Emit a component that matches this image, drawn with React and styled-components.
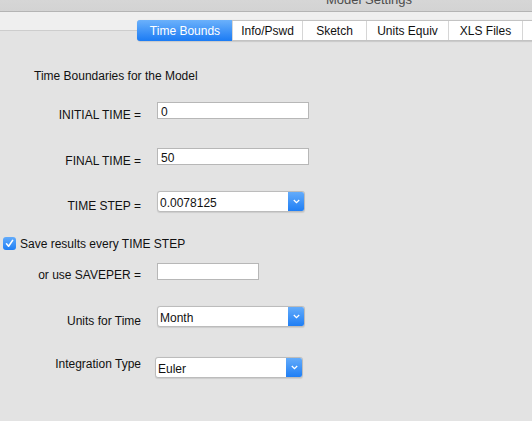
import React from "react";
import styled, { createGlobalStyle } from "styled-components";

const Global = createGlobalStyle`
  html, body { margin: 0; padding: 0; overflow: hidden; }
  body {
    width: 532px; height: 421px;
    background: #e3e3e3;
    font-family: "Liberation Sans", Arial, Helvetica, sans-serif;
    font-size: 12px;
    color: #111;
  }
`;

const Window = styled.div`
  width: 532px;
  height: 421px;
  background: #e3e3e3;
  overflow: hidden;
  display: flex;
  flex-direction: column;
`;

const TitleBar = styled.div`
  height: 11px;
  flex: none;
  background: linear-gradient(#d6d6d6, #d3d3d3);
  border-bottom: 1px solid #b4b4b4;
  overflow: hidden;
`;

const Title = styled.div`
  font-size: 13px;
  line-height: 13px;
  color: #4c4c4c;
  padding-left: 326px;
  margin-top: -7px;
  white-space: nowrap;
`;

const TabArea = styled.div`
  flex: none;
  height: 29px;
  box-sizing: border-box;
  padding: 8px 0 0 137px;
  background: linear-gradient(
    #efefef 0,
    #efefef 18px,
    #cdcdcd 18px,
    #cdcdcd 19px,
    #e3e3e3 19px
  );
  display: flex;
  align-items: flex-start;
`;

const TabStrip = styled.div`
  display: flex;
  height: 21px;
  box-sizing: border-box;
  border: 1px solid #c3c3c3;
  border-right: none;
  border-radius: 4px 0 0 4px;
  background: #fff;
  box-shadow: 0 0.5px 1px rgba(0, 0, 0, 0.12);
`;

const Tab = styled.div`
  flex: none;
  width: ${(p) => p.$w}px;
  box-sizing: border-box;
  display: flex;
  align-items: center;
  justify-content: center;
  font-size: 12px;
  line-height: 14px;
  white-space: nowrap;
  overflow: hidden;
  border-left: ${(p) => (p.$first ? "none" : "1px solid #d6d6d6")};
  color: ${(p) => (p.$active ? "#fff" : "#111")};
  background: ${(p) =>
    p.$active ? "linear-gradient(#6bb1fb, #1b7bf4)" : "#fff"};
  border-radius: ${(p) => (p.$first ? "3px 0 0 3px" : "0")};
  margin: ${(p) => (p.$active ? "-1px 0 -1px -1px" : "0")};
  padding-left: ${(p) => (p.$active ? "1px" : "0")};
`;

const Content = styled.div`
  display: flex;
  flex-direction: column;
`;

const Heading = styled.div`
  margin: 28px 0 0 34px;
  line-height: 14px;
  height: 14px;
`;

const Row = styled.div`
  display: flex;
  align-items: flex-start;
  height: ${(p) => p.$h}px;
  margin-top: ${(p) => p.$top}px;
`;

const Label = styled.div`
  width: 141px;
  flex: none;
  text-align: right;
  line-height: 14px;
  padding-top: ${(p) => p.$pad}px;
  white-space: nowrap;
`;

const Field = styled.div`
  margin-left: ${(p) => p.$shift ?? 16}px;
  width: ${(p) => p.$w}px;
  height: 17px;
  box-sizing: border-box;
  background: #fff;
  border: 1px solid #b7b7b7;
  padding: 2px 3px 0;
  line-height: 14px;
  white-space: nowrap;
`;

const Select = styled.div`
  margin-left: ${(p) => p.$shift ?? 16}px;
  width: 148px;
  height: 21px;
  box-sizing: border-box;
  display: flex;
  background: #fff;
  border: 1px solid #bcbcbc;
  border-radius: 3px;
  overflow: hidden;
  box-shadow: 0 0.5px 1px rgba(0, 0, 0, 0.1);
`;

const SelectValue = styled.div`
  flex: 1;
  padding: 4px 0 0 2px;
  line-height: 14px;
  white-space: nowrap;
`;

const SelectButton = styled.div`
  width: 17px;
  flex: none;
  margin: -1px -1px -1px 0;
  background: linear-gradient(#67aefb, #1c7cf4);
  border-radius: 0 3px 3px 0;
  display: flex;
  align-items: center;
  justify-content: center;
`;

const CheckRow = styled.div`
  display: flex;
  align-items: flex-start;
  margin-top: 25px;
  height: 13px;
  padding-left: 3px;
  gap: 4px;
`;

const CheckBox = styled.div`
  width: 13px;
  height: 13px;
  box-sizing: border-box;
  border-radius: 3px;
  background: linear-gradient(#63acfb, #1f7ef5);
  display: flex;
  align-items: center;
  justify-content: center;
`;

const CheckLabel = styled.div`
  line-height: 14px;
  white-space: nowrap;
`;

const Chevron = () => (
  <svg width="7" height="5" viewBox="0 0 7 5">
    <path d="M0.8 1 L3.5 3.6 L6.2 1" fill="none" stroke="#fff" strokeWidth="1.3" />
  </svg>
);

const Check = () => (
  <svg width="11" height="11" viewBox="0 0 11 11">
    <path d="M2.5 5.8 L4.6 8.2 L8.6 2.4" fill="none" stroke="#fff" strokeWidth="1.6" strokeLinecap="round" strokeLinejoin="round" />
  </svg>
);

const Dropdown = ({ value, shift }) => (
  <Select $shift={shift}>
    <SelectValue>{value}</SelectValue>
    <SelectButton>
      <Chevron />
    </SelectButton>
  </Select>
);

const tabs = [
  { label: "Time Bounds", w: 95 },
  { label: "Info/Pswd", w: 70 },
  { label: "Sketch", w: 64 },
  { label: "Units Equiv", w: 82 },
  { label: "XLS Files", w: 74 },
  { label: "", w: 40 },
];

export default function App() {
  return (
    <Window>
      <Global />
      <TitleBar>
        <Title>Model Settings</Title>
      </TitleBar>
      <TabArea>
        <TabStrip>
          {tabs.map((t, i) => (
            <Tab key={i} $w={t.w} $first={i === 0} $active={i === 0}>
              {t.label}
            </Tab>
          ))}
        </TabStrip>
      </TabArea>
      <Content>
        <Heading>Time Boundaries for the Model</Heading>
        <Row $top={19} $h={17}>
          <Label $pad={5.5}>INITIAL TIME =</Label>
          <Field $w={152}>0</Field>
        </Row>
        <Row $top={29} $h={17}>
          <Label $pad={5.5}>FINAL TIME =</Label>
          <Field $w={152}>50</Field>
        </Row>
        <Row $top={26} $h={21}>
          <Label $pad={7.5}>TIME STEP =</Label>
          <Dropdown value="0.0078125" />
        </Row>
        <CheckRow>
          <CheckBox>
            <Check />
          </CheckBox>
          <CheckLabel>Save results every TIME STEP</CheckLabel>
        </CheckRow>
        <Row $top={13} $h={17}>
          <Label $pad={4.5}>or use SAVEPER =</Label>
          <Field $w={102}></Field>
        </Row>
        <Row $top={26} $h={21}>
          <Label $pad={7.5}>Units for Time</Label>
          <Dropdown value="Month" />
        </Row>
        <Row $top={30} $h={21}>
          <Label $pad={0}>Integration Type</Label>
          <Dropdown value="Euler" shift={14} />
        </Row>
      </Content>
    </Window>
  );
}
